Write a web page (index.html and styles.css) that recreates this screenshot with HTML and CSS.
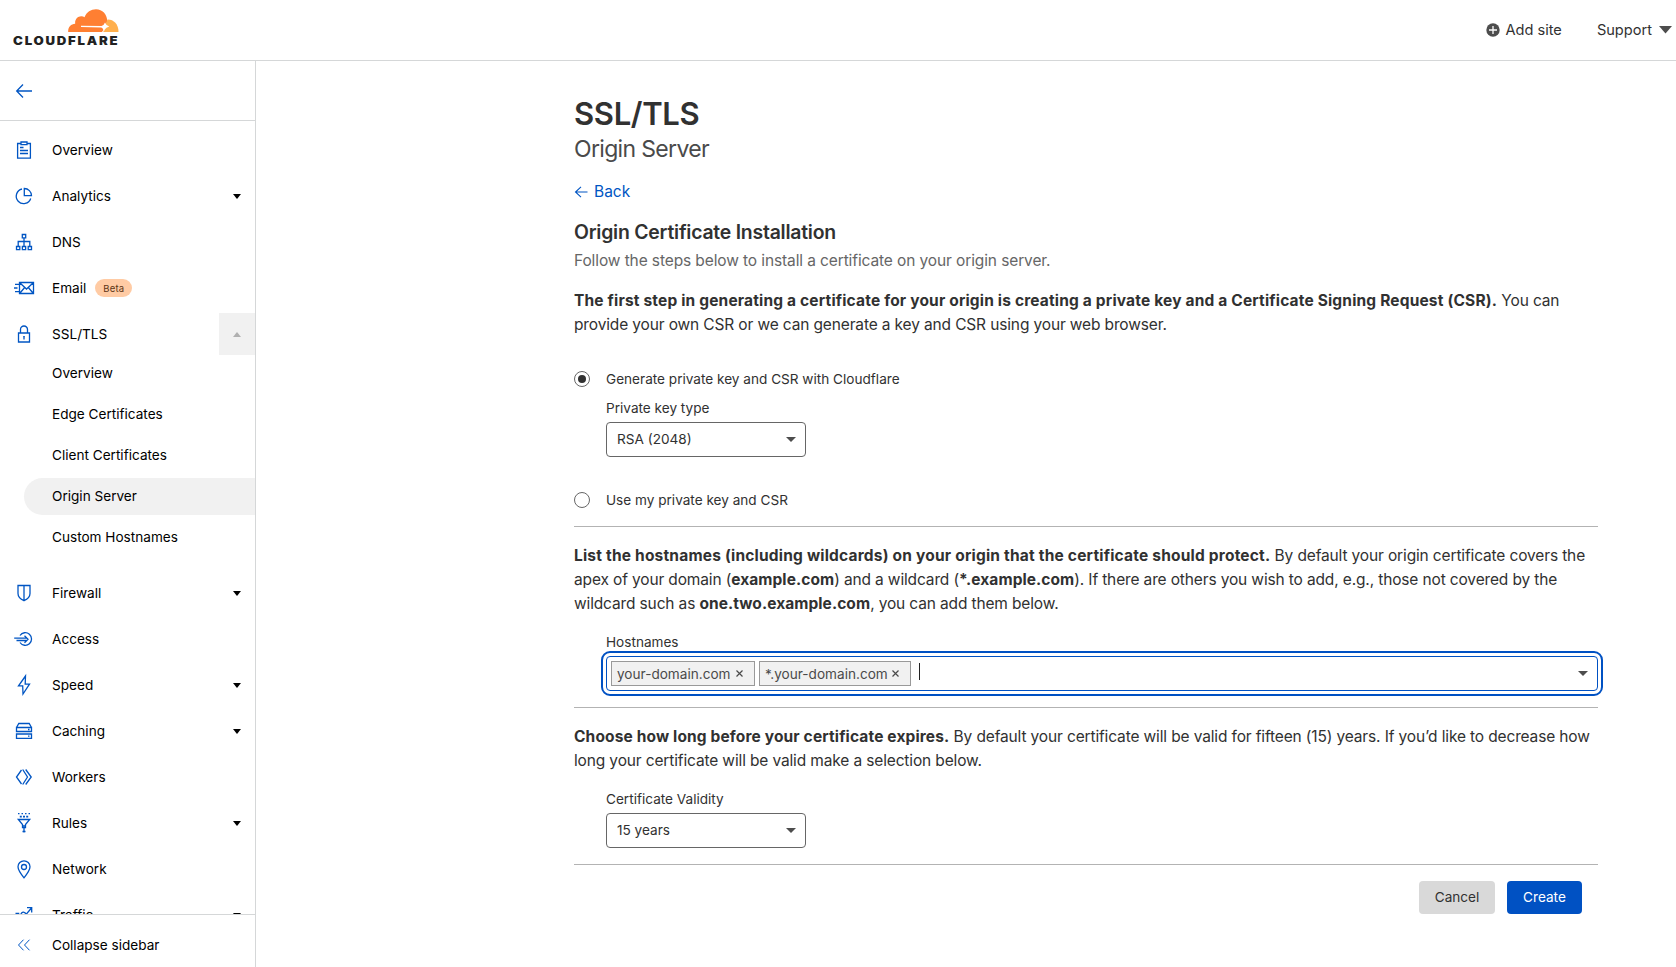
FILE: index.html
```html
<!DOCTYPE html>
<html lang="en">
<head>
<meta charset="utf-8">
<title>SSL/TLS - Origin Server</title>
<link rel="stylesheet" href="styles.css">
</head>
<body>
<header class="topbar">
  <div class="brand">
    <svg class="cloud" width="51" height="24" viewBox="0 0 51 24"><path fill="#ff7f32" d="M.2 23c-.4-4.500 2.500-8 7-8.200C6.500 10.500 10 7 13.500 7.300q1.700.1 3 1C18.500 3 23 .3 28 .3c6.500 0 11 5 11.200 11.400L38 17l-4 6z"/><path fill="#ffb04e" d="M39.500 10.500c6-.2 11 4.500 11 12.300q0 .2-.4.200H35l2-6z"/><path fill="#fff" d="M13 16.700l20.500.2q2.300-.2 3.500-3.400 1 3 4.300 4-3.300 1-4.500 3l-1.200 2.700q0-4-2.500-4.600L13 18.100z"/></svg>
    <span class="wordmark">CLOUDFLARE</span>
  </div>
  <div class="actions">
    <a class="add"><svg width="14" height="14" viewBox="0 0 14 14"><circle cx="7" cy="7" r="6.700" fill="#4d4d4d"/><path d="M7 3v8M3 7h8" stroke="#fff" stroke-width="1.300"/></svg><span>Add site</span></a>
    <a class="support"><span>Support</span><svg width="13" height="8" viewBox="0 0 13 8"><path d="M0 0h13L6.500 7.500z" fill="#4d4d4d"/></svg></a>
  </div>
</header>
<div class="shell">
  <aside class="sidebar">
    <div class="site"><svg class="ico" width="24" height="24" viewBox="0 0 24 24"><path d="M20 12H5M11 5.500L4.700 12l6.300 6.500"/></svg></div>
    <nav class="nav">
      <a class="item"><svg class="ico" viewBox="0 0 24 24"><path d="M9 5.500H5.600v14.700h12.800V5.500H15M9 4h6v2.700H9zM8 9.500h3.500M8 12.500h8M8 15.500h8"/></svg><span>Overview</span></a>
      <a class="item"><svg class="ico" viewBox="0 0 24 24"><path d="M10 5a7.400 7.400 0 1 0 8.700 9.500M12.300 4.500v7.200h7.200a7.200 7.200 0 0 0-7.200-7.200z"/></svg><span>Analytics</span><i class="caret"></i></a>
      <a class="item"><svg class="ico" viewBox="0 0 24 24"><path d="M10.300 4.500h3.400v3.400h-3.400zM4.500 16.500h3.300v3.200H4.500zM10.350 16.500h3.300v3.200h-3.300zM16.200 16.500h3.300v3.200h-3.300zM12 8v8.500M6.200 16.500v-5h11.600v5"/></svg><span>DNS</span></a>
      <a class="item"><svg class="ico" viewBox="0 0 24 24"><path d="M7.500 6.500h14v11h-14zM3 8.300h4.500M2 12h3.500M3 15.600h4.500M8 7l6.500 6L21 7M8 17l4.700-5.500M21 17l-4.700-5.500"/></svg><span>Email</span><b class="badge">Beta</b></a>
      <a class="item"><svg class="ico" viewBox="0 0 24 24"><path d="M6.500 11h11v9h-11zM8.500 11V7.500a3.500 3.500 0 0 1 7 0V11M12 14.500V17.500M11.200 14.700h1.600"/></svg><span>SSL/TLS</span><span class="toggle"><i class="caret up"></i></span></a>
      <div class="sub">
        <a>Overview</a><a>Edge Certificates</a><a>Client Certificates</a><a class="active">Origin Server</a><a>Custom Hostnames</a>
      </div>
      <a class="item"><svg class="ico" viewBox="0 0 24 24"><path d="M6 4.500h12v8q0 4.500-6 7.200-6-2.700-6-7.200zM12 4.500v15"/></svg><span>Firewall</span><i class="caret"></i></a>
      <a class="item"><svg class="ico" viewBox="0 0 24 24"><path d="M8 8.500a6.300 6.300 0 1 1 0 7M2.200 11.200h13M4.500 13.500h10.500M12.500 8.800l3.500 3.500-3.500 3.500"/></svg><span>Access</span></a>
      <a class="item"><svg class="ico" viewBox="0 0 24 24"><path d="M13.500 3L6.500 12.800h4.200L11 21l6.500-9.800h-4.300z"/></svg><span>Speed</span><i class="caret"></i></a>
      <a class="item"><svg class="ico" viewBox="0 0 24 24"><path d="M4.500 8.500h15v4h-15zM4.500 15h15v4.300h-15zM4.500 8.500l2.300-4h10.400l2.300 4M16 10.500h1.500M16 17.200h1.500"/></svg><span>Caching</span><i class="caret"></i></a>
      <a class="item"><svg class="ico" viewBox="0 0 24 24"><path d="M9.500 5l-5 7 5 7M10.700 4.500l4.800 7.500-4.800 7.500M13.700 4.500l5.500 7.500-5.500 7.500"/></svg><span>Workers</span></a>
      <a class="item"><svg class="ico" viewBox="0 0 24 24"><path d="M6 2.700h12" stroke-dasharray="1.500 2"/><path d="M7.800 5.700h8.500" stroke-width="1.700" stroke-dasharray="2 1.200"/><path d="M6.300 8.500h11.400l-4.200 5v3h-3v-3zM12 14v7.500M10.500 20.500h3"/></svg><span>Rules</span><i class="caret"></i></a>
      <a class="item"><svg class="ico" viewBox="0 0 24 24"><path d="M12 20.800C8.500 16.500 6 13 6 9.800a6 6 0 0 1 12 0c0 3.200-2.500 6.700-6 11z"/><circle cx="12" cy="10" r="2.500"/></svg><span>Network</span></a>
      <a class="item"><svg class="ico" viewBox="0 0 24 24"><path d="M3.500 10.500h3.800M14 11.500l5.500-6.500M15 4.700h4.700v4.700M9 12.500a2.600 2.600 0 1 1 4.500 1M4 17h4"/></svg><span>Traffic</span><i class="caret"></i></a>
    </nav>
    <div class="collapse"><svg class="ico thin" viewBox="0 0 24 24"><path d="M11.500 6.700L6.500 12l5 5.300M17.500 6.700L12.500 12l5 5.300"/></svg><span>Collapse sidebar</span></div>
  </aside>
  <main class="content">
    <h1>SSL/TLS</h1>
    <p class="subtitle">Origin Server</p>
    <a class="back"><svg width="14" height="12" viewBox="0 0 14 12"><path d="M13.500 6H2M7 .8L1.500 6 7 11.200"/></svg><span>Back</span></a>
    <h2>Origin Certificate Installation</h2>
    <p class="lead">Follow the steps below to install a certificate on your origin server.</p>
    <p class="text first"><strong>The first step in generating a certificate for your origin is creating a private key and a Certificate Signing Request (CSR).</strong> You can<br>provide your own CSR or we can generate a key and CSR using your web browser.</p>
    <label class="option"><i class="radio on"></i><span>Generate private key and CSR with Cloudflare</span></label>
    <div class="field">
      <span class="label">Private key type</span>
      <div class="select"><span>RSA (2048)</span><i class="caret gray"></i></div>
    </div>
    <label class="option second"><i class="radio"></i><span>Use my private key and CSR</span></label>
    <section class="block hosts">
      <p class="text"><strong>List the hostnames (including wildcards) on your origin that the certificate should protect.</strong> By default your origin certificate covers the<br>apex of your domain (<b>example.com</b>) and a wildcard (<b><span class="star-char">*</span>.example.com</b>). If there are others you wish to add, e.g., those not covered by the<br>wildcard such as <b>one.two.example.com</b>, you can add them below.</p>
      <div class="field">
        <span class="label">Hostnames</span>
        <div class="tags">
          <span class="tag"><span>your-domain.com</span><svg width="7" height="7" viewBox="0 0 7 7"><path d="M.5.5l6 6M6.500.5l-6 6"/></svg></span>
          <span class="tag star"><span><span class="star-char">*</span>.your-domain.com</span><svg width="7" height="7" viewBox="0 0 7 7"><path d="M.5.5l6 6M6.500.5l-6 6"/></svg></span>
          <i class="cursor"></i><i class="caret gray"></i>
        </div>
      </div>
    </section>
    <section class="block validity">
      <p class="text"><strong>Choose how long before your certificate expires.</strong> By default your certificate will be valid for fifteen (15) years. If you’d like to decrease how<br>long your certificate will be valid make a selection below.</p>
      <div class="field">
        <span class="label">Certificate Validity</span>
        <div class="select"><span>15 years</span><i class="caret gray"></i></div>
      </div>
    </section>
    <footer class="buttons"><button class="cancel">Cancel</button><button class="create">Create</button></footer>
  </main>
</div>
</body>
</html>
```
FILE: styles.css
```css
* { box-sizing: border-box; }
body { margin: 0; height: 967px; overflow: hidden; background: #fff; color: #313131; font-family: Inter, "Liberation Sans", sans-serif; font-size: 13.6px; display: flex; flex-direction: column; }
h1, h2, p { margin: 0; }
.topbar { height: 61px; flex: none; border-bottom: 1px solid #d5d7d8; display: flex; justify-content: space-between; padding: 0 4px 0 12px; }
.brand { display: flex; flex-direction: column; width: 107px; padding-top: 9px; }
.cloud { margin-left: 56px; flex: none; }
.wordmark { margin-left: .5px; font-size: 12px; line-height: 15px; font-weight: 900; letter-spacing: 1.6px; color: #222; white-space: nowrap; transform: scaleX(1.1); transform-origin: left; }
.actions { display: flex; gap: 35px; align-items: center; height: 59px; font-size: 14.6px; }
.actions a { display: flex; align-items: center; gap: 6px; white-space: nowrap; }
.actions .add { gap: 5px; }
.actions .support { gap: 7px; }
.shell { flex: 1; display: flex; min-height: 0; }
.sidebar { width: 256px; flex: none; border-right: 1px solid #d5d7d8; display: flex; flex-direction: column; color: #000; }
.site { height: 60px; flex: none; border-bottom: 1px solid #d5d7d8; padding: 18px 12px; }
.ico { width: 24px; height: 24px; flex: none; fill: none; stroke: #0055c3; stroke-width: 1.3; }
.ico.thin { stroke-width: 1; }
.nav { flex: 1; min-height: 0; overflow: hidden; padding-top: 6px; }
.item { display: flex; align-items: center; height: 46px; padding: 0 14px 0 12px; }
.item > .ico { margin-right: 16px; }
.item > .ico + span { padding-bottom: 1px; }
.caret { width: 0; height: 0; margin-left: auto; border: 4px solid transparent; border-top: 5px solid #000; border-bottom: 0; }
.caret.up { border-bottom: 5px solid #b0b0b0; border-top: 0; }
.caret.gray { border-width: 5px 5px 0; border-top-color: #4d4d4d; }
.badge { margin-left: 9px; background: #ffcba4; color: #5c3515; font-size: 9.500px; font-weight: 400; letter-spacing: .2px; line-height: 18px; padding-top: 1px; height: 18px; border-radius: 9px; width: 37px; text-align: center; }
.toggle { margin: 0 -14px 0 auto; width: 36px; height: 42px; background: #f1f1f1; display: flex; align-items: center; }
.toggle .caret { margin-left: 14px; }
.sub { margin: -4px 0 12px; padding: 0 0 0 24px; display: flex; flex-direction: column; }
.sub a { height: 37px; line-height: 36px; margin: 2px 0; padding-left: 28px; border-radius: 19px 0 0 19px; }
.sub .active { background: #f1f1f1; }
.collapse { height: 53px; flex: none; border-top: 1px solid #d5d7d8; display: flex; align-items: center; gap: 16px; padding: 8px 12px 0; }
.collapse span { padding-bottom: 1px; }
.content { width: 1024px; margin-left: 318px; padding-top: 33px; }
h1 { font-size: 31px; line-height: 40px; font-weight: 600; letter-spacing: -.34px; }
.subtitle { font-size: 23px; line-height: 30px; letter-spacing: -.67px; color: #4a4a4a; }
.back { display: flex; align-items: center; gap: 6px; height: 24px; margin-top: 15px; color: #0055c3; font-size: 15.5px; }
.back svg { fill: none; stroke: #0055c3; stroke-width: 1.1; margin-top: 2px; }
h2 { margin-top: 16px; font-size: 19.4px; line-height: 26px; font-weight: 600; letter-spacing: -.22px; }
.lead { font-size: 15.5px; line-height: 24px; margin-top: 4px; letter-spacing: -.11px; color: #666; }
.text { font-size: 15.5px; line-height: 24px; letter-spacing: -.14px; white-space: nowrap; }
.text strong { font-weight: 700; letter-spacing: .17px; }
.text b { font-weight: 700; letter-spacing: .07px; }
.hosts strong { letter-spacing: .2px; }
.validity strong { letter-spacing: .14px; }
.star-char { letter-spacing: -1.500px; }
.first { margin-top: 16px; }
.option { display: flex; align-items: center; gap: 16px; height: 20px; margin-top: 32px; }
.option span { padding-bottom: 1px; }
.radio { width: 16px; height: 16px; border: 1px solid #666; border-radius: 50%; display: flex; }
.radio.on::after { content: ""; width: 8px; height: 8px; margin: auto; border-radius: 50%; background: #313131; }
.field { padding-left: 32px; }
.option + .field { margin-top: 9px; }
.label { display: block; line-height: 20px; margin-bottom: 4px; }
.select { width: 200px; height: 35px; border: 1px solid #666; border-radius: 4px; display: flex; align-items: center; padding: 0 9px 0 10px; }
.select span { padding-bottom: 1px; }
.option.second { margin-top: 33px; }
.block { border-top: 1px solid #b3b3b3; margin-top: 16px; padding-top: 17px; }
.block .field { margin-top: 16px; }
.tags { height: 35px; border: 1px solid #0051c3; border-radius: 4px; outline: 2px solid #0051c3; outline-offset: 3px; display: flex; align-items: center; gap: 4px; padding: 0 9px 0 4px; }
.tag { display: flex; align-items: center; justify-content: space-between; width: 144px; height: 25px; border: 1px solid #999; background: #f1f1f1; color: #4a4a4a; padding: 0 11px 0 5px; }
.tag.star { width: 152px; }
.tag svg { fill: none; stroke: #4a4a4a; stroke-width: 1.200; }
.cursor { width: 1px; height: 17px; background: #222; margin: -4px 0 0 4px; }
.buttons { border-top: 1px solid #b3b3b3; margin-top: 16px; padding: 16px 16px 0 0; display: flex; justify-content: flex-end; gap: 12px; }
button { border: 0; border-radius: 4px; height: 33px; width: 76px; padding: 0 0 1px; font: inherit; color: #313131; background: #d9d9d9; }
.create { width: 75px; background: #0051c3; color: #fff; }
```
